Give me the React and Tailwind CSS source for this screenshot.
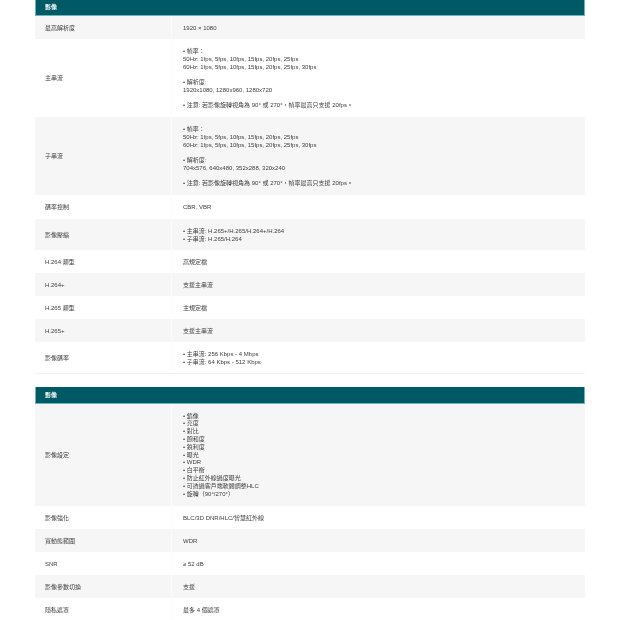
const font = "[font-family:'Liberation_Sans','Noto_Sans_CJK_TC',sans-serif]";

function Row({ label, shaded, height, children }) {
  return (
    <div className={`grid grid-cols-[137px_1fr] ${height} ${shaded ? 'bg-[#f6f6f6]' : 'bg-white'}`}>
      <div className="flex items-center pl-[10px] border-r border-[#fbfbfb]">{label}</div>
      <div className="flex flex-col justify-center pl-[11px]">{children}</div>
    </div>
  );
}

function Header() {
  return (
    <div className="h-[17px] flex items-center pl-[9px] bg-[#005a66] border border-[#6fb3b8] border-t-0 text-white font-bold">
      影像
    </div>
  );
}

function Streams({ rates }) {
  return (
    <div className="flex flex-col gap-[7px]">
      <div>
        <p>• 幀率：</p>
        <p>50Hz: 1fps, 5fps, 10fps, 15fps, 20fps, 25fps</p>
        <p>60Hz: 1fps, 5fps, 10fps, 15fps, 20fps, 25fps, 30fps</p>
      </div>
      <div>
        <p>• 解析度:</p>
        <p>{rates}</p>
      </div>
      <p>• 注意: 若影像旋轉視角為 90° 或 270°，幀率最高只支援 20fps。</p>
    </div>
  );
}

const settings = ['鏡像', '亮度', '對比', '飽和度', '銳利度', '曝光', 'WDR', '白平衡', '防止紅外線過度曝光', '可透過客戶端軟體調整HLC', '旋轉（90°/270°）'];

export default function App() {
  return (
    <div className={`w-[620px] h-[620px] overflow-hidden bg-white px-[35px] text-[6px] leading-[8px] text-[#3d3d3d] blur-[0.3px] ${font}`}>
      <div className="w-[550px] -mt-[1px]">
        <Header />
        <div className="border-b border-[#f2f2f2]">
          <Row label="最高解析度" shaded height="h-[23px]">1920 × 1080</Row>
          <Row label="主串流" height="h-[78px]">
            <Streams rates="1920x1080, 1280x960, 1280x720" />
          </Row>
          <Row label="子串流" shaded height="h-[78px]">
            <Streams rates="704x576, 640x480, 352x288, 320x240" />
          </Row>
          <Row label="碼率控制" height="h-[24px]">CBR, VBR</Row>
          <Row label="影像壓縮" shaded height="h-[31px]">
            <p>• 主串流: H.265+/H.265/H.264+/H.264</p>
            <p>• 子串流: H.265/H.264</p>
          </Row>
          <Row label="H.264 類型" height="h-[23px]">高規定檔</Row>
          <Row label="H.264+" shaded height="h-[23px]">支援主串流</Row>
          <Row label="H.265 類型" height="h-[23px]">主規定檔</Row>
          <Row label="H.265+" shaded height="h-[23px]">支援主串流</Row>
          <Row label="影像碼率" height="h-[31px]">
            <p>• 主串流: 256 Kbps - 4 Mbps</p>
            <p>• 子串流: 64 Kbps - 512 Kbps</p>
          </Row>
        </div>
        <div className="mt-[13px]">
          <Header />
          <Row label="影像設定" shaded height="h-[102px]">
            <div className="leading-[7.8px] pt-[1px]">
              {settings.map((s) => (
                <p key={s}>• {s}</p>
              ))}
            </div>
          </Row>
          <Row label="影像強化" height="h-[23px]">BLC/3D DNR/HLC/智慧紅外線</Row>
          <Row label="寬動態範圍" shaded height="h-[23px]">WDR</Row>
          <Row label="SNR" height="h-[23px]">≥ 52 dB</Row>
          <Row label="影像參數切換" shaded height="h-[23px]">支援</Row>
          <Row label="隱私遮罩" height="h-[23px]">最多 4 個遮罩</Row>
        </div>
      </div>
    </div>
  );
}
